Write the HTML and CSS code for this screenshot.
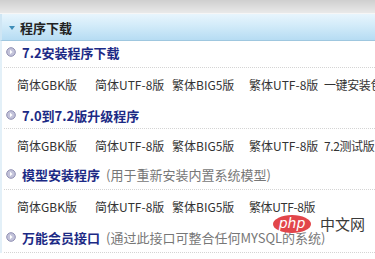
FILE: index.html
```html
<!DOCTYPE html>
<html lang="zh-CN">
<head>
    <meta charset="UTF-8">
    <meta name="viewport" content="width=device-width, initial-scale=1.0">
    <title>程序下载</title>
    <link rel="stylesheet" href="styles.css">
</head>
<body>
    <div class="topbar"></div>
    <div class="panel-head">
        <span class="caret"></span>
        <span class="panel-title">程序下载</span>
    </div>

    <div class="panel-body">
        <div class="section">
            <div class="sec-title">
                <svg class="bullet" width="10" height="10" viewBox="0 0 10 10"><circle cx="5" cy="5" r="4.3" fill="#c3c3da" stroke="#8f8fb3" stroke-width="1"/><path d="M4 2.8 L6.6 5 L4 7.2 Z" fill="#fff"/></svg>
                <span class="name">7.2安装程序下载</span>
            </div>
            <div class="links">
                <a>简体GBK版</a>
                <a>简体UTF-8版</a>
                <a>繁体BIG5版</a>
                <a>繁体UTF-8版</a>
                <a>一键安装包</a>
            </div>
        </div>

        <div class="section">
            <div class="sec-title">
                <svg class="bullet" width="10" height="10" viewBox="0 0 10 10"><circle cx="5" cy="5" r="4.3" fill="#c3c3da" stroke="#8f8fb3" stroke-width="1"/><path d="M4 2.8 L6.6 5 L4 7.2 Z" fill="#fff"/></svg>
                <span class="name">7.0到7.2版升级程序</span>
            </div>
            <div class="links">
                <a>简体GBK版</a>
                <a>简体UTF-8版</a>
                <a>繁体BIG5版</a>
                <a>繁体UTF-8版</a>
                <a>7.2测试版</a>
            </div>
        </div>

        <div class="section">
            <div class="sec-title">
                <svg class="bullet" width="10" height="10" viewBox="0 0 10 10"><circle cx="5" cy="5" r="4.3" fill="#c3c3da" stroke="#8f8fb3" stroke-width="1"/><path d="M4 2.8 L6.6 5 L4 7.2 Z" fill="#fff"/></svg>
                <span class="name">模型安装程序</span>
                <span class="note">(用于重新安装内置系统模型)</span>
            </div>
            <div class="links">
                <a>简体GBK版</a>
                <a>简体UTF-8版</a>
                <a>繁体BIG5版</a>
                <a>繁体UTF-8版</a>
            </div>
        </div>

        <div class="section">
            <div class="sec-title">
                <svg class="bullet" width="10" height="10" viewBox="0 0 10 10"><circle cx="5" cy="5" r="4.3" fill="#c3c3da" stroke="#8f8fb3" stroke-width="1"/><path d="M4 2.8 L6.6 5 L4 7.2 Z" fill="#fff"/></svg>
                <span class="name">万能会员接口</span>
                <span class="note">(通过此接口可整合任何MYSQL的系统)</span>
            </div>
        </div>

        <div class="watermark">
            <span class="php">php</span>
            <span class="cn">中文网</span>
        </div>
    </div>
</body>
</html>
```

FILE: styles.css
```css
body {
    margin: 0;
    font-family: "Noto Sans CJK SC", "DejaVu Sans", sans-serif;
    background: #fff;
    color: #333;
    overflow: hidden;
}

.topbar {
    height: 13px;
    background: linear-gradient(#cfcfcf, #e9e9e9);
    border-bottom: 1px solid #f6f6f6;
}

.panel-head {
    height: 26px;
    display: flex;
    align-items: center;
    background: linear-gradient(#e8f5fd, #d2ebf9 45%, #b6dcf3);
    border-bottom: 1px solid #9fc7df;
    border-left: 2px solid #cfe6f4;
}

.caret {
    width: 0;
    height: 0;
    margin: 1px 5px 0 7px;
    border-left: 3px solid transparent;
    border-right: 3px solid transparent;
    border-top: 4px solid #3d8db8;
}

.panel-title {
    font-size: 13px;
    font-weight: bold;
    color: #222;
}

.panel-body {
    position: relative;
    border-left: 2px solid #e3f0f8;
    padding: 0 0 0 2px;
}

.sec-title {
    display: flex;
    align-items: center;
    height: 22px;
    padding-bottom: 4px;
    border-bottom: 1px dotted #d4d4d4;
    white-space: nowrap;
}

.section:last-child .sec-title {
    border-bottom: none;
}

.bullet {
    margin: 0 6px 0 2px;
    flex: none;
}

.name {
    font-size: 13px;
    font-weight: bold;
    color: #1c2a85;
}

.note {
    font-size: 13px;
    color: #777;
    margin-left: 6px;
}

.links {
    display: grid;
    grid-template-columns: 78px 77px 77px 75px 60px;
    padding: 9px 0 11px 13px;
    line-height: 16px;
    white-space: nowrap;
    overflow: hidden;
}

.links a {
    font-size: 12px;
    color: #333;
}

.section:nth-child(2) .links {
    padding-bottom: 9px;
}

.section:nth-child(2) .sec-title {
    padding-bottom: 2px;
}

.links a:last-child {
    letter-spacing: -0.4px;
}

.watermark {
    position: absolute;
    left: 271px;
    top: 174px;
    display: flex;
    align-items: center;
    gap: 9px;
    white-space: nowrap;
}

.php {
    display: inline-block;
    width: 38px;
    height: 18px;
    line-height: 16px;
    border-radius: 50%;
    background: #e2454a;
    color: #fff;
    font-family: "DejaVu Sans", sans-serif;
    font-style: italic;
    font-size: 14px;
    text-align: center;
}

.cn {
    font-size: 15px;
    line-height: 18px;
    color: #3a3a3a;
}
```
